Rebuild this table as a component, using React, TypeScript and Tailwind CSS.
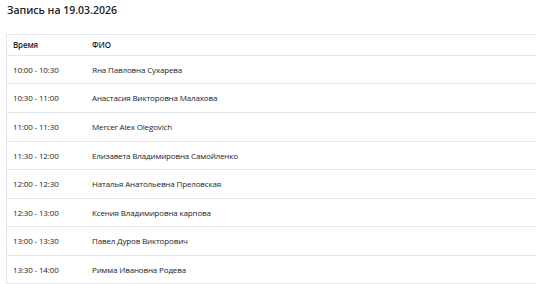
import React from "react";

const rows: { time: string; name: string; h: string }[] = [
  { time: "10:00 - 10:30", name: "Яна Павловна Сухарева", h: "h-[28px]" },
  { time: "10:30 - 11:00", name: "Анастасия Викторовна Малахова", h: "h-[29px]" },
  { time: "11:00 - 11:30", name: "Mercer Alex Olegovich", h: "h-[29px]" },
  { time: "11:30 - 12:00", name: "Елизавета Владимировна Самойленко", h: "h-[28px]" },
  { time: "12:00 - 12:30", name: "Наталья Анатольевна Преловская", h: "h-[29px]" },
  { time: "12:30 - 13:00", name: "Ксения Владимировна карпова", h: "h-[28px]" },
  { time: "13:00 - 13:30", name: "Павел Дуров Викторович", h: "h-[29px]" },
  { time: "13:30 - 14:00", name: "Римма Ивановна Родева", h: "h-[28px]" },
];

export default function App() {
  return (
    <div
      className="w-[536px] h-[284px] overflow-hidden bg-white text-[#212529]"
      style={{ fontFamily: '"Open Sans", "Noto Sans", sans-serif' }}
    >
      <div className="pl-[7px] pt-[2px] h-[34px]">
        <h1 className="text-[10.5px] font-semibold leading-[16px]">Запись на 19.03.2026</h1>
      </div>
      <div className="ml-[6px] border-l border-t border-[#e4e7eb]">
        <div className="flex h-[21px] items-center border-b border-[#e4e7eb] text-[8px] tracking-[-0.15px] font-semibold">
          <div className="w-[85px] pl-[6px]">Время</div>
          <div className="flex-1">ФИО</div>
        </div>
        {rows.map((r) => (
          <div
            key={r.time}
            className={`flex items-center border-b border-[#e4e7eb] text-[8px] tracking-[-0.15px] ${r.h}`}
          >
            <div className="w-[85px] pl-[6px]">{r.time}</div>
            <div className="flex-1">{r.name}</div>
          </div>
        ))}
      </div>
    </div>
  );
}
